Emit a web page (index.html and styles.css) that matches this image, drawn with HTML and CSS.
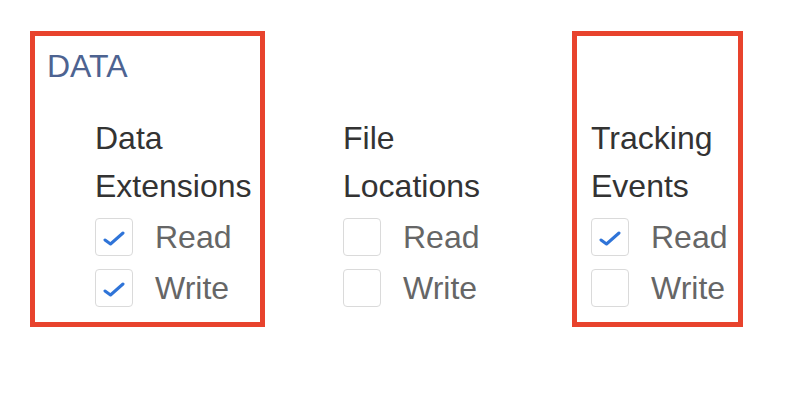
FILE: index.html
```html
<!DOCTYPE html>
<html lang="en">
<head>
  <meta charset="UTF-8">
  <title>Permissions</title>
  <link rel="stylesheet" href="styles.css">
</head>
<body>
  <div class="permissions">
    <div class="group group-first highlight">
      <h2 class="group-title">DATA</h2>
      <div class="column">
        <div class="column-title">Data<br>Extensions</div>
        <div class="option">
          <span class="checkbox checked"><svg viewBox="0 0 22 15"><polyline points="2,9 7.5,13 20,2"/></svg></span>
          <span class="option-label">Read</span>
        </div>
        <div class="option">
          <span class="checkbox checked"><svg viewBox="0 0 22 15"><polyline points="2,9 7.5,13 20,2"/></svg></span>
          <span class="option-label">Write</span>
        </div>
      </div>
    </div>

    <div class="group group-middle">
      <div class="column">
        <div class="column-title">File<br>Locations</div>
        <div class="option">
          <span class="checkbox"></span>
          <span class="option-label">Read</span>
        </div>
        <div class="option">
          <span class="checkbox"></span>
          <span class="option-label">Write</span>
        </div>
      </div>
    </div>

    <div class="group group-last highlight">
      <div class="column">
        <div class="column-title">Tracking<br>Events</div>
        <div class="option">
          <span class="checkbox checked"><svg viewBox="0 0 22 15"><polyline points="2,9 7.5,13 20,2"/></svg></span>
          <span class="option-label">Read</span>
        </div>
        <div class="option">
          <span class="checkbox"></span>
          <span class="option-label">Write</span>
        </div>
      </div>
    </div>
  </div>
</body>
</html>
```

FILE: styles.css
```css
* {
  box-sizing: border-box;
  margin: 0;
  padding: 0;
}

body {
  background-color: #ffffff;
  font-family: "Liberation Sans", Arial, sans-serif;
  font-size: 32px;
}

.permissions {
  display: flex;
  align-items: flex-start;
  padding: 31px 0 0 30px;
}

.group {
  border: 5px solid transparent;
}

.highlight {
  border-color: #e8432d;
}

.group-first {
  width: 235px;
  padding: 12px 0 15px 12px;
}

.group-middle {
  margin-left: 73px;
  width: 170px;
  padding-top: 78px;
}

.group-last {
  margin-left: 64px;
  width: 171px;
  padding: 78px 0 15px 14px;
}

.group-title {
  font-size: 32px;
  font-weight: normal;
  line-height: 36px;
  color: #4d6391;
}

.group-first .column {
  margin: 30px 0 0 48px;
}

.column-title {
  line-height: 48px;
  color: #333333;
  white-space: nowrap;
}

.option {
  display: flex;
  align-items: center;
  height: 38px;
  margin-top: 13px;
}

.column-title + .option {
  margin-top: 8px;
}

.checkbox {
  display: flex;
  align-items: center;
  justify-content: center;
  width: 38px;
  height: 38px;
  border: 1px solid #dadada;
  border-radius: 4px;
  background-color: #ffffff;
}

.checkbox svg {
  width: 22px;
  height: 15px;
  margin-top: 3px;
  fill: none;
  stroke: #2f74d8;
  stroke-width: 3;
  stroke-linecap: round;
  stroke-linejoin: round;
}

.option-label {
  margin-left: 22px;
  color: #666666;
}
```
